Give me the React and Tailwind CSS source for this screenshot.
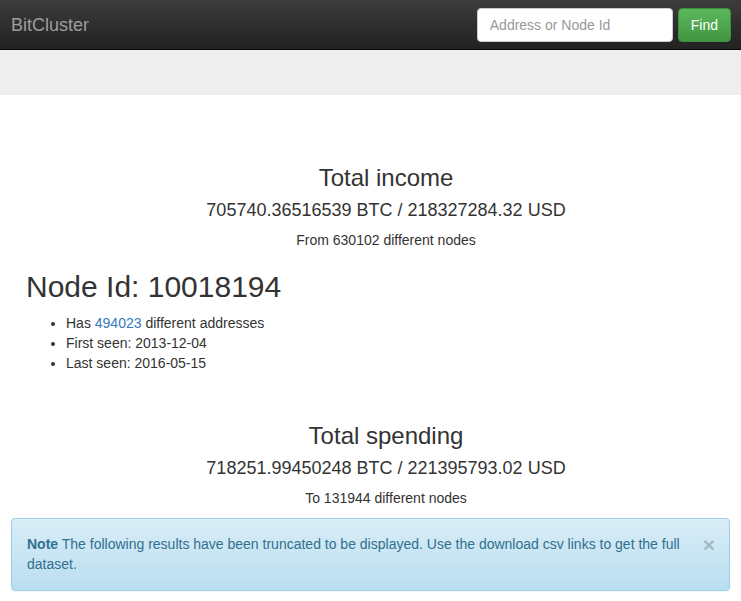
export default function App() {
  return (
    <div className="min-h-[601px] bg-white text-[#333] text-[14px] leading-[20px]" style={{ fontFamily: '"Liberation Sans", Arial, sans-serif' }}>
      <nav className="h-[50px] flex items-center justify-between bg-gradient-to-b from-[#3c3c3c] to-[#222] border-b border-[#080808] pl-[11px] pr-[10px]">
        <span className="text-[18px] text-[#9d9d9d]">BitCluster</span>
        <div className="flex items-center gap-[5px]">
          <input
            className="w-[196px] h-[34px] rounded-[4px] bg-white border border-[#ccc] px-[12px] text-[14px] text-[#555] placeholder:text-[#999] outline-none"
            placeholder="Address or Node Id"
          />
          <button className="h-[34px] px-[12px] rounded-[4px] text-white text-[14px] border border-[#3e8f3e] bg-gradient-to-b from-[#5cb85c] to-[#419641]">Find</button>
        </div>
      </nav>
      <div className="h-[45px] bg-[#eee]" />
      <div className="pl-[31px] text-center">
        <h3 className="mt-[70px] text-[24px] leading-[26px]">Total income</h3>
        <div className="mt-[9px] text-[18px] leading-[20px]">705740.36516539 BTC / 218327284.32 USD</div>
        <p className="mt-[10px]">From 630102 different nodes</p>
      </div>
      <div className="pl-[26px]">
        <h2 className="mt-[20px] text-[30px] leading-[33px]">Node Id: 10018194</h2>
        <ul className="mt-[10px] pl-[40px] list-disc">
          <li>Has <a className="text-[#337ab7]" href="#">494023</a> different addresses</li>
          <li>First seen: 2013-12-04</li>
          <li>Last seen: 2016-05-15</li>
        </ul>
      </div>
      <div className="pl-[31px] text-center">
        <h3 className="mt-[50px] text-[24px] leading-[26px]">Total spending</h3>
        <div className="mt-[9px] text-[18px] leading-[20px]">718251.99450248 BTC / 221395793.02 USD</div>
        <p className="mt-[10px]">To 131944 different nodes</p>
      </div>
      <div className="mx-[11px] mt-[10px] relative border border-[#9acfea] rounded-[4px] bg-gradient-to-b from-[#d9edf7] to-[#b9def0] text-[#31708f] pt-[15px] pb-[16px] pl-[15px] pr-[45px] shadow-[0_1px_0_rgba(255,255,255,0.25)_inset,0_1px_2px_rgba(0,0,0,0.05)]">
        <strong className="font-bold">Note</strong> The following results have been truncated to be displayed. Use the download csv links to get the full dataset.
        <span className="absolute right-[14px] top-[15px] text-[21px] leading-[21px] font-bold text-black opacity-20">×</span>
      </div>
    </div>
  );
}
